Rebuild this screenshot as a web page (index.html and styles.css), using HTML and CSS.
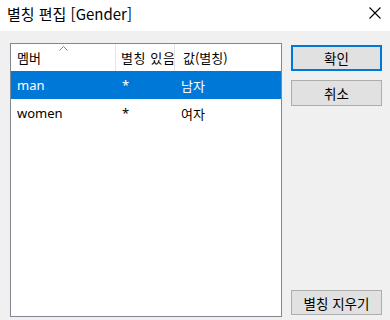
FILE: index.html
```html
<!DOCTYPE html>
<html lang="ko">
<head>
    <meta charset="UTF-8">
    <title>별칭 편집</title>
    <link rel="stylesheet" href="styles.css">
</head>
<body>
    <div class="titlebar">
        <span class="title">별칭 편집 [Gender]</span>
        <svg class="close" width="12" height="12" viewBox="0 0 12 12">
            <path d="M0.5 0.5 L11.5 11.5 M11.5 0.5 L0.5 11.5" stroke="#000" stroke-width="1.1" fill="none"/>
        </svg>
    </div>
    <div class="content">
        <div class="list">
            <div class="row header">
                <div class="cell col1">멤버
                    <svg class="sort" width="9" height="5" viewBox="0 0 9 5">
                        <path d="M0.5 4.5 L4.5 0.5 L8.5 4.5" stroke="#888" stroke-width="1" fill="none"/>
                    </svg>
                </div>
                <div class="cell col2">별칭 있음</div>
                <div class="cell col3">값(별칭)</div>
            </div>
            <div class="row selected">
                <div class="cell col1">man</div>
                <div class="cell col2">*</div>
                <div class="cell col3">남자</div>
            </div>
            <div class="row">
                <div class="cell col1">women</div>
                <div class="cell col2">*</div>
                <div class="cell col3">여자</div>
            </div>
        </div>
        <div class="buttons">
            <button class="btn default">확인</button>
            <button class="btn">취소</button>
            <button class="btn bottom">별칭 지우기</button>
        </div>
    </div>
</body>
</html>
```

FILE: styles.css
```css
body {
    margin: 0;
    width: 390px;
    height: 320px;
    background: #f0f0f0;
    font-family: "Noto Sans", "Noto Sans CJK KR", sans-serif;
    overflow: hidden;
}
.titlebar {
    height: 31px;
    background: #fff;
    display: flex;
    align-items: center;
    justify-content: space-between;
    padding: 0 9px 0 7px;
}
.title {
    font-family: "Noto Sans CJK KR", sans-serif;
    font-size: 15px;
    color: #000;
    margin-top: -5px;
}
.close {
    margin-top: -6px;
}
.content {
    display: flex;
    gap: 9px;
    padding: 12px 8px 3px 10px;
    height: 274px;
}
.list {
    width: 270px;
    height: 272px;
    border: 1px solid #828790;
    background: #fff;
    font-family: "Noto Sans", "Noto Sans CJK KR", sans-serif;
    font-size: 13px;
}
.row {
    display: flex;
    height: 28px;
    align-items: center;
}
.row.header {
    height: 27px;
}
.cell {
    padding-left: 6px;
    box-sizing: border-box;
    white-space: nowrap;
    overflow: hidden;
    height: 100%;
    display: flex;
    align-items: center;
}
.col1 {
    width: 105px;
    position: relative;
    overflow: visible;
}
.col2 {
    width: 59px;
}
.col3 {
    flex: 1;
}
.header .cell {
    border-right: 1px solid #e5e5e5;
    font-family: "Noto Sans CJK KR", sans-serif;
}
.header .col2 {
    padding-left: 5px;
    letter-spacing: 0.6px;
}
.header .col3 {
    border-right: none;
    padding-left: 8px;
}
.sort {
    position: absolute;
    left: 48px;
    top: 2px;
}
.selected {
    background: #0078d7;
    color: #fff;
}
.buttons {
    display: flex;
    flex-direction: column;
    gap: 9px;
    padding-top: 2px;
    width: 91px;
}
.btn {
    height: 26px;
    background: #e1e1e1;
    border: 1px solid #adadad;
    font-family: "Noto Sans CJK KR", sans-serif;
    font-size: 13.5px;
    color: #000;
    padding: 0;
}
.btn.default {
    border: 2px solid #0078d7;
}
.btn.bottom {
    margin-top: auto;
    margin-bottom: 2px;
    height: 25px;
}
```
